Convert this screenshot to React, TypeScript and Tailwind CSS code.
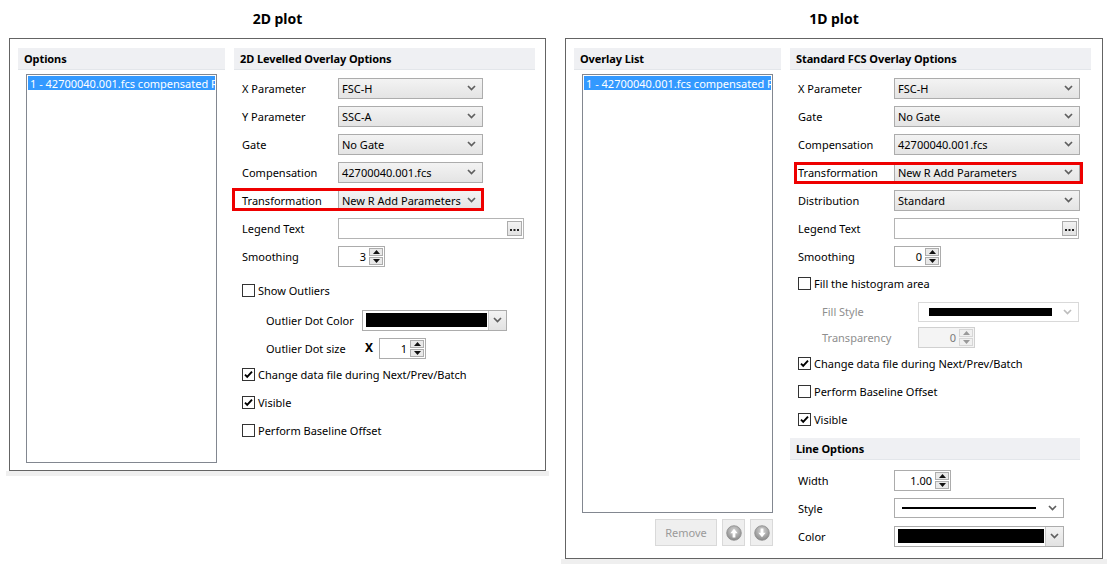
import React from "react";

function Chevron({ light }: { light?: boolean }) {
  return (
    <svg width="9" height="6" viewBox="0 0 9 6" className="shrink-0">
      <path d="M1 1l3.5 3.5L8 1" fill="none" stroke={light ? "#bdbdbd" : "#5f5f5f"} strokeWidth="1.7" />
    </svg>
  );
}

function Tri({ down, light }: { down?: boolean; light?: boolean }) {
  return (
    <svg width="7" height="4" viewBox="0 0 7 4">
      <path d={down ? "M0 0h7L3.5 4z" : "M0 4h7L3.5 0z"} fill={light ? "#9a9a9a" : "#111"} />
    </svg>
  );
}

function Select({ value, className }: { value: string; className: string }) {
  return (
    <div className={`flex h-[21px] items-center justify-between border border-[#acacac] bg-linear-to-b from-[#f3f3f3] to-[#e4e4e4] pl-[3px] pr-[6px] ${className}`}>
      <span className="whitespace-nowrap">{value}</span>
      <Chevron />
    </div>
  );
}

function Spin({ value, className, disabled }: { value: string; className: string; disabled?: boolean }) {
  return (
    <div className={`flex h-[21px] items-stretch border ${disabled ? "border-[#d0d0d0] bg-[#f4f4f4] text-[#7a7a7a]" : "border-[#acacac] bg-white"} ${className}`}>
      <span className="flex flex-1 items-center justify-end pr-[3px]">{value}</span>
      <div className="flex w-[15px] flex-col gap-px py-px pr-px">
        <div className={`flex flex-1 items-center justify-center border ${disabled ? "border-[#d6d6d6] bg-[#f0f0f0]" : "border-[#adadad] bg-[#e9e9e9]"}`}>
          <Tri light={disabled} />
        </div>
        <div className={`flex flex-1 items-center justify-center border ${disabled ? "border-[#d6d6d6] bg-[#f0f0f0]" : "border-[#adadad] bg-[#e9e9e9]"}`}>
          <Tri down light={disabled} />
        </div>
      </div>
    </div>
  );
}

function TextBox({ className }: { className: string }) {
  return (
    <div className={`flex h-[21px] items-center justify-end border border-[#b4b4b4] bg-white pr-px ${className}`}>
      <div className="flex h-[15px] w-[15px] items-end justify-center border border-[#acacac] bg-linear-to-b from-[#f3f3f3] to-[#e2e2e2] pb-[4px]">
        <svg width="9" height="2" viewBox="0 0 9 2">
          <rect x="0" y="0" width="2" height="2" fill="#222" />
          <rect x="3.5" y="0" width="2" height="2" fill="#222" />
          <rect x="7" y="0" width="2" height="2" fill="#222" />
        </svg>
      </div>
    </div>
  );
}

function ColorPick({ className, swatch }: { className: string; swatch: string }) {
  return (
    <div className={`flex h-[21px] items-stretch border border-[#acacac] bg-white ${className}`}>
      <div className="flex flex-1 items-center pl-[3px] pr-px">
        <div className={`h-[14px] bg-black ${swatch}`} />
      </div>
      <div className="flex w-[18px] items-center justify-center border-l border-[#c8c8c8] bg-linear-to-b from-[#f3f3f3] to-[#e2e2e2]">
        <Chevron />
      </div>
    </div>
  );
}

function Check({ checked, label }: { checked?: boolean; label: string }) {
  return (
    <div className="flex items-center gap-[3px]">
      <div className="flex h-[13px] w-[13px] items-center justify-center border border-[#333] bg-white">
        {checked && (
          <svg width="9" height="9" viewBox="0 0 9 9">
            <path d="M1 4.6l2.2 2.3L8 1.6" fill="none" stroke="#000" strokeWidth="1.9" />
          </svg>
        )}
      </div>
      <span className="whitespace-nowrap">{label}</span>
    </div>
  );
}

function Header({ title, className }: { title: string; className: string }) {
  return (
    <div className={`flex h-[22px] shrink-0 items-center border-b border-[#e3e6ea] bg-[#eff0f3] pl-[6px] font-bold tracking-[-0.1px] ${className}`}>
      {title}
    </div>
  );
}

function Row({ label, h, children, indent, gray }: { label: string; h: string; children?: React.ReactNode; indent?: boolean; gray?: boolean }) {
  return (
    <div className={`flex items-center ${h} ${indent ? "pl-[32px]" : "pl-[8px]"}`}>
      <span className={`w-[96px] shrink-0 whitespace-nowrap ${gray ? "text-[#8e8e8e]" : ""}`}>{label}</span>
      {children}
    </div>
  );
}

function ListBox({ className }: { className: string }) {
  return (
    <div className={`shrink-0 overflow-hidden border border-[#828790] bg-white p-px ${className}`}>
      <div className="flex h-[14px] items-center overflow-hidden whitespace-nowrap bg-[#3399ff] pl-[2px] text-white">
        1 - 42700040.001.fcs compensated R
      </div>
    </div>
  );
}

function CircleArrow({ down }: { down?: boolean }) {
  const id = down ? "gd" : "gu";
  return (
    <svg width="16" height="16" viewBox="0 0 16 16">
      <defs>
        <radialGradient id={id} cx="50%" cy="35%" r="65%">
          <stop offset="0" stopColor="#d6d6d6" />
          <stop offset="1" stopColor="#8a8a8a" />
        </radialGradient>
      </defs>
      <circle cx="8" cy="8" r="7.3" fill={`url(#${id})`} stroke="#8d8d8d" strokeWidth="0.8" />
      <path
        d={down ? "M6.6 3.5h2.8v4.3h2.3L8 12.3 4.3 7.8h2.3z" : "M6.6 12.5h2.8V8.2h2.3L8 3.7 4.3 8.2h2.3z"}
        fill="#fff"
      />
    </svg>
  );
}

export default function App() {
  return (
    <div className="flex h-[568px] w-[1111px] overflow-hidden bg-white font-['Noto_Sans',sans-serif] text-[11px] leading-none text-black">
      {/* 2D plot */}
      <div className="ml-[9px] flex w-[537px] shrink-0 flex-col">
        <div className="flex h-[38px] items-center justify-center text-[14px] font-bold">2D plot</div>
        <div className="flex h-[433px] gap-[9px] border border-[#646464] pt-[9px] pr-[10px] pl-[8px]">
          <div className="flex w-[207px] shrink-0 flex-col">
            <Header title="Options" className="w-full" />
            <ListBox className="mt-[4px] ml-[8px] h-[389px] w-[191px]" />
          </div>
          <div className="flex w-[301px] shrink-0 flex-col">
            <Header title="2D Levelled Overlay Options" className="w-full" />
            <div className="mt-[4px] flex flex-col">
              <Row label="X Parameter" h="h-[28px]"><Select value="FSC-H" className="w-[145px]" /></Row>
              <Row label="Y Parameter" h="h-[28px]"><Select value="SSC-A" className="w-[145px]" /></Row>
              <Row label="Gate" h="h-[28px]"><Select value="No Gate" className="w-[145px]" /></Row>
              <Row label="Compensation" h="h-[28px]"><Select value="42700040.001.fcs" className="w-[145px]" /></Row>
              <div className="relative">
                <Row label="Transformation" h="h-[28px]"><Select value="New R Add Parameters" className="w-[145px]" /></Row>
                <div className="absolute top-[2px] left-[-2px] h-[23px] w-[252px] border-[3px] border-[#ee0000]" />
              </div>
              <Row label="Legend Text" h="h-[28px]"><TextBox className="w-[186px]" /></Row>
              <Row label="Smoothing" h="h-[28px]"><Spin value="3" className="w-[47px]" /></Row>
              <div className="mt-[6px] flex h-[28px] items-center pl-[8px]"><Check label="Show Outliers" /></div>
              <Row label="Outlier Dot Color" h="h-[32px]" indent>
                <ColorPick className="w-[145px]" swatch="w-[121px]" />
              </Row>
              <Row label="Outlier Dot size" h="h-[24px]" indent>
                <span className="w-[17px] pl-[3px] text-[12px] font-bold">X</span>
                <Spin value="1" className="w-[47px]" />
              </Row>
              <div className="flex h-[28px] items-center pl-[8px]"><Check checked label="Change data file during Next/Prev/Batch" /></div>
              <div className="flex h-[28px] items-center pl-[8px]"><Check checked label="Visible" /></div>
              <div className="flex h-[28px] items-center pl-[8px]"><Check label="Perform Baseline Offset" /></div>
            </div>
          </div>
        </div>
        <div className="-mx-[3px] h-[5px] bg-[#efefef]" />
      </div>

      {/* 1D plot */}
      <div className="ml-[19px] flex w-[538px] shrink-0 flex-col">
        <div className="flex h-[38px] items-center justify-center text-[14px] font-bold">1D plot</div>
        <div className="flex h-[521px] gap-[9px] border border-[#646464] pt-[9px] pr-[11px] pl-[8px]">
          <div className="flex w-[207px] shrink-0 flex-col">
            <Header title="Overlay List" className="w-full" />
            <ListBox className="mt-[4px] ml-[8px] h-[439px] w-[191px]" />
            <div className="mt-[6px] flex justify-end gap-[5px] pr-[8px]">
              <div className="flex h-[27px] w-[62px] items-center justify-center border border-[#d9d9d9] bg-[#efefef] text-[#9a9a9a]">Remove</div>
              <div className="flex h-[27px] w-[23px] items-center justify-center border border-[#d9d9d9] bg-[#efefef]"><CircleArrow /></div>
              <div className="flex h-[27px] w-[23px] items-center justify-center border border-[#d9d9d9] bg-[#efefef]"><CircleArrow down /></div>
            </div>
          </div>
          <div className="flex w-[301px] shrink-0 flex-col">
            <Header title="Standard FCS Overlay Options" className="w-full" />
            <div className="mt-[4px] flex flex-col">
              <Row label="X Parameter" h="h-[28px]"><Select value="FSC-H" className="w-[186px]" /></Row>
              <Row label="Gate" h="h-[28px]"><Select value="No Gate" className="w-[186px]" /></Row>
              <Row label="Compensation" h="h-[28px]"><Select value="42700040.001.fcs" className="w-[186px]" /></Row>
              <div className="relative">
                <Row label="Transformation" h="h-[28px]"><Select value="New R Add Parameters" className="w-[186px]" /></Row>
                <div className="absolute top-[4px] left-[4px] h-[22px] w-[289px] border-[3px] border-[#ee0000]" />
              </div>
              <Row label="Distribution" h="h-[28px]"><Select value="Standard" className="w-[186px]" /></Row>
              <Row label="Legend Text" h="h-[28px]"><TextBox className="w-[185px]" /></Row>
              <Row label="Smoothing" h="h-[28px]"><Spin value="0" className="w-[47px]" /></Row>
              <div className="flex h-[27px] items-center pl-[8px]"><Check label="Fill the histogram area" /></div>
              <Row label="Fill Style" h="h-[29px]" indent gray>
                <div className="flex h-[20px] w-[161px] items-center justify-between border border-[#d9d9d9] bg-white pr-[6px] pl-[10px]">
                  <div className="h-[8px] w-[123px] bg-black" />
                  <Chevron light />
                </div>
              </Row>
              <Row label="Transparency" h="h-[23px]" indent gray>
                <Spin value="0" className="w-[57px]" disabled />
              </Row>
              <div className="flex h-[28px] items-center pl-[8px]"><Check checked label="Change data file during Next/Prev/Batch" /></div>
              <div className="flex h-[28px] items-center pl-[8px]"><Check label="Perform Baseline Offset" /></div>
              <div className="flex h-[28px] items-center pl-[8px]"><Check checked label="Visible" /></div>
              <Header title="Line Options" className="mt-[5px] w-[290px]" />
              <div className="mt-[6px] flex flex-col">
                <Row label="Width" h="h-[28px]"><Spin value="1.00" className="w-[57px]" /></Row>
                <Row label="Style" h="h-[28px]">
                  <div className="flex h-[20px] w-[170px] items-center justify-between border border-[#acacac] bg-white pr-[6px] pl-[7px]">
                    <div className="h-[1.5px] w-[134px] bg-black" />
                    <Chevron />
                  </div>
                </Row>
                <Row label="Color" h="h-[28px]">
                  <ColorPick className="w-[170px]" swatch="w-[146px]" />
                </Row>
              </div>
            </div>
          </div>
        </div>
        <div className="-mx-[4px] h-[5px] bg-[#efefef]" />
      </div>
    </div>
  );
}
